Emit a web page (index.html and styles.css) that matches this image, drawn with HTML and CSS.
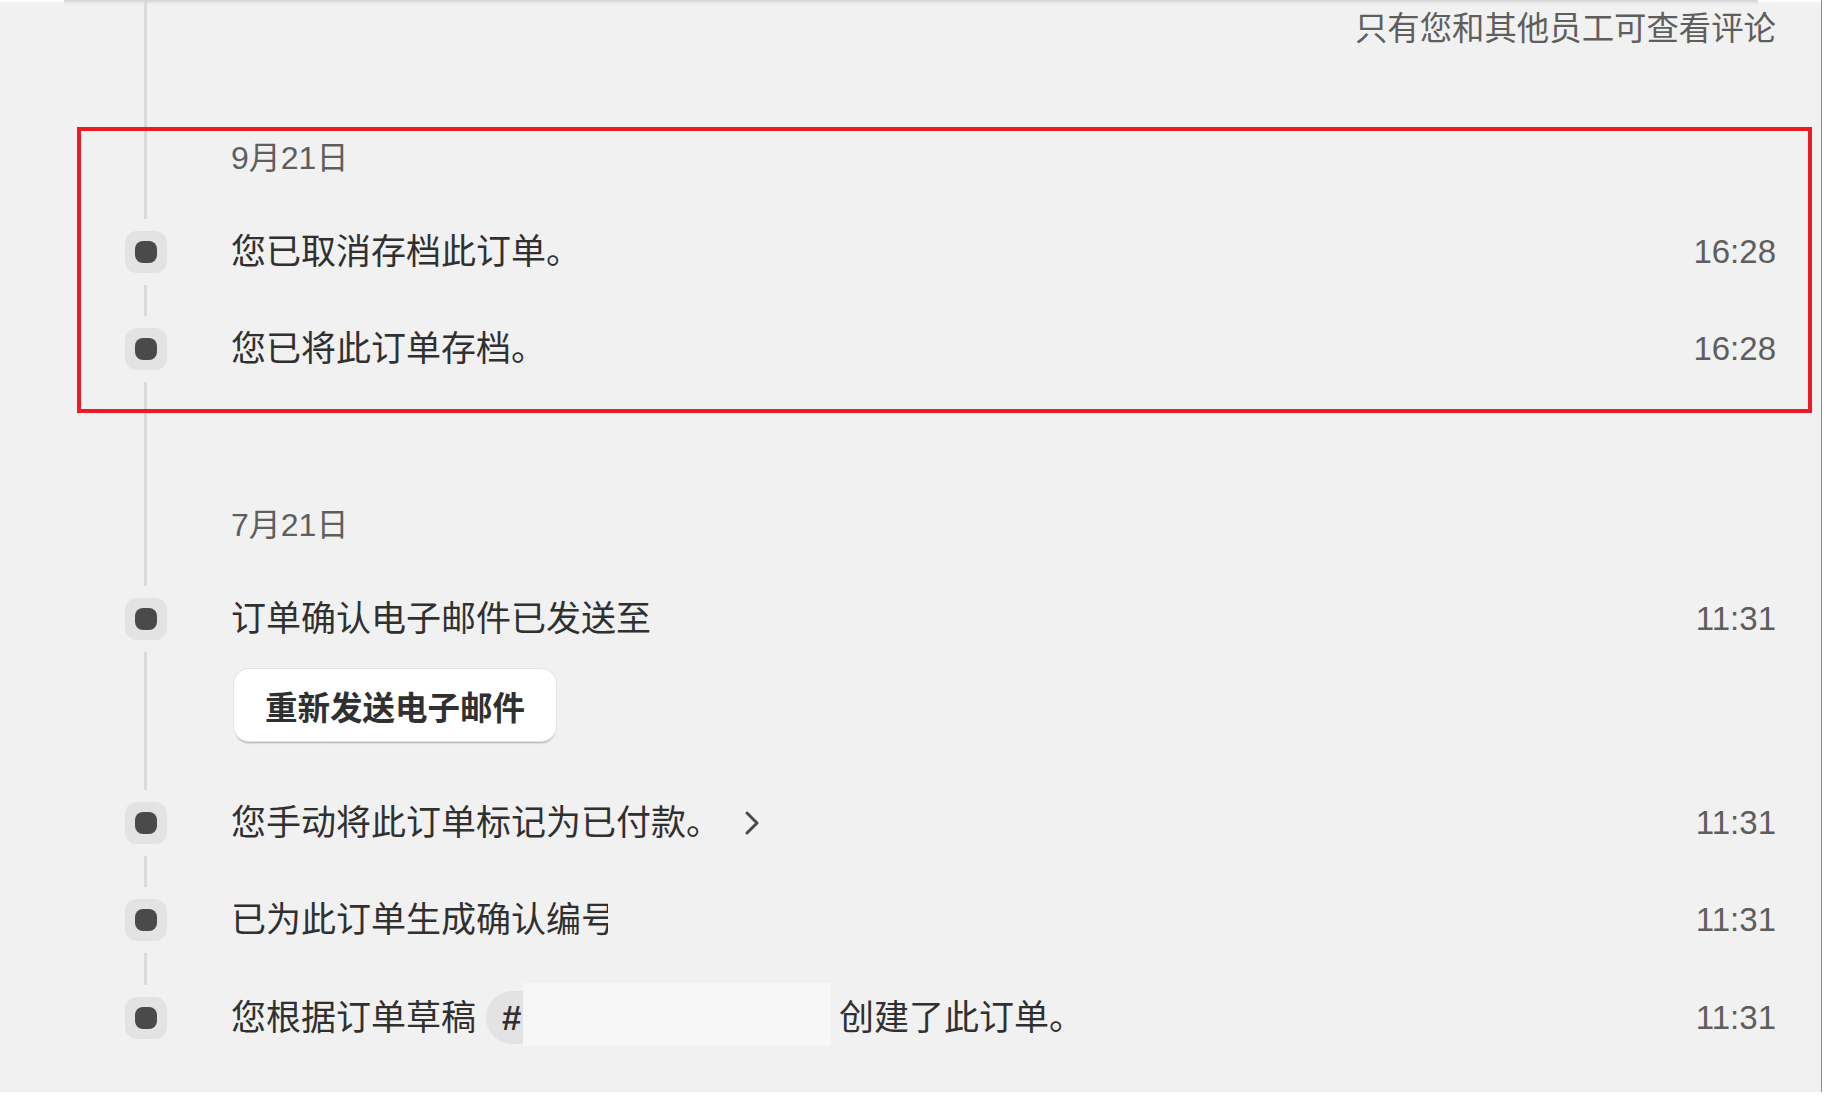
FILE: index.html
```html
<!DOCTYPE html>
<html lang="zh-CN">
<head>
<meta charset="utf-8">
<title>时间线</title>
<link rel="stylesheet" href="styles.css">
</head>
<body>
<div class="frame">
  <div class="topbar">
    <span class="top-white-left"></span>
    <span class="card-edge"></span>
    <span class="top-white-right"></span>
  </div>
  <p class="note">只有您和其他员工可查看评论</p>

  <div class="timeline">
    <section class="day day-highlight">
      <h3 class="date">9月21日</h3>
      <div class="event">
        <span class="bubble"><span class="dot"></span></span>
        <span class="msg">您已取消存档此订单。</span>
        <span class="time">16:28</span>
      </div>
      <div class="event">
        <span class="bubble"><span class="dot"></span></span>
        <span class="msg">您已将此订单存档。</span>
        <span class="time">16:28</span>
      </div>
    </section>

    <section class="day day-second">
      <h3 class="date">7月21日</h3>
      <div class="event-group">
        <div class="event">
          <span class="bubble"><span class="dot"></span></span>
          <span class="msg">订单确认电子邮件已发送至</span>
          <span class="time">11:31</span>
        </div>
        <button class="btn" type="button">重新发送电子邮件</button>
      </div>
      <div class="event">
        <span class="bubble"><span class="dot"></span></span>
        <span class="msg">您手动将此订单标记为已付款。</span>
        <svg class="chevron" width="14" height="24" viewBox="0 0 14 24" aria-hidden="true"><polyline points="2,2 12,12 2,22" fill="none" stroke="#4a4a4a" stroke-width="3" stroke-linecap="round" stroke-linejoin="round"/></svg>
        <span class="time">11:31</span>
      </div>
      <div class="event">
        <span class="bubble"><span class="dot"></span></span>
        <span class="msg msg-clip">已为此订单生成确认编号</span>
        <span class="time">11:31</span>
      </div>
      <div class="event">
        <span class="bubble"><span class="dot"></span></span>
        <span class="msg">您根据订单草稿</span>
        <span class="tag">#</span>
        <span class="redact"></span>
        <span class="msg msg-after">创建了此订单。</span>
        <span class="time">11:31</span>
      </div>
    </section>
  </div>
</div>
</body>
</html>
```

FILE: styles.css
```css
html, body {
  margin: 0;
  padding: 0;
  background: #ffffff;
}

body {
  font-family: "Liberation Sans", "Noto Sans CJK SC", sans-serif;
  color: #303030;
}

.frame {
  width: 1821px;
  height: 1092px;
  background: #f1f1f1;
  border-right: 1px solid #8c8c8c;
  overflow: hidden;
}

.topbar {
  display: flex;
  height: 5px;
}

.top-white-left {
  width: 64px;
  height: 2px;
  background: #ffffff;
}

.card-edge {
  width: 1694px;
  height: 5px;
  background: linear-gradient(#d3d3d3, #e6e6e6 50%, #f1f1f1);
}

.top-white-right {
  flex: 1;
  height: 2px;
  background: #ffffff;
}

.note {
  margin: 4px 45px 0 0;
  text-align: right;
  font-size: 32.4px;
  line-height: 40px;
  color: #5e5e5e;
}

.timeline {
  position: relative;
  z-index: 0;
  margin-top: 78px;
}

.timeline::before {
  content: "";
  position: absolute;
  left: 144px;
  width: 3px;
  top: -127px;
  bottom: 60px;
  background: #dadada;
  z-index: -1;
}

.day {
  padding: 0 45px 0 125px;
}

.day-highlight {
  margin: 0 9px 0 77px;
  border: 4px solid #ed1c24;
  padding: 5px 32px 11px 44px;
}

.day-second {
  margin-top: 90px;
}

.date {
  margin: 0 0 23px 106px;
  height: 44px;
  font-size: 32px;
  line-height: 44px;
  font-weight: 400;
  color: #5e5e5e;
}

.event {
  display: flex;
  align-items: center;
  height: 97.5px;
}

.bubble {
  flex: none;
  width: 42px;
  height: 42px;
  margin-right: 64px;
  border-radius: 12px;
  background: #e3e3e3;
  box-shadow: 0 0 0 12px #f1f1f1;
  display: flex;
  align-items: center;
  justify-content: center;
}

.dot {
  width: 22px;
  height: 22px;
  border-radius: 8px;
  background: #4a4a4a;
}

.msg {
  flex: none;
  font-size: 35px;
  line-height: 48px;
  color: #303030;
  white-space: nowrap;
}

.msg-clip {
  width: 377px;
  overflow: hidden;
}

.msg-after {
  margin-left: 8px;
}

.time {
  margin-left: auto;
  font-size: 33px;
  line-height: 48px;
  color: #5e5e5e;
}

.chevron {
  flex: none;
  margin-left: 24px;
}

.btn {
  display: block;
  height: 72px;
  margin: 1.5px 0 33px 109px;
  padding: 0 31px;
  border: none;
  border-radius: 15px;
  background: #ffffff;
  font-family: inherit;
  font-size: 32.5px;
  font-weight: 700;
  color: #303030;
  box-shadow: 0 0 0 1px #e2e2e2, 0 3px 2px -1px rgba(0, 0, 0, 0.3);
}

.tag {
  flex: none;
  box-sizing: border-box;
  width: 37px;
  height: 53px;
  margin-left: 10px;
  padding-left: 16px;
  border-radius: 27px 0 0 27px;
  background: #e3e3e3;
  display: flex;
  align-items: center;
  font-size: 35px;
  font-weight: 700;
  color: #303030;
  overflow: hidden;
}

.redact {
  flex: none;
  width: 308px;
  height: 63px;
  margin-bottom: 7px;
  background: #f7f7f7;
}
```
